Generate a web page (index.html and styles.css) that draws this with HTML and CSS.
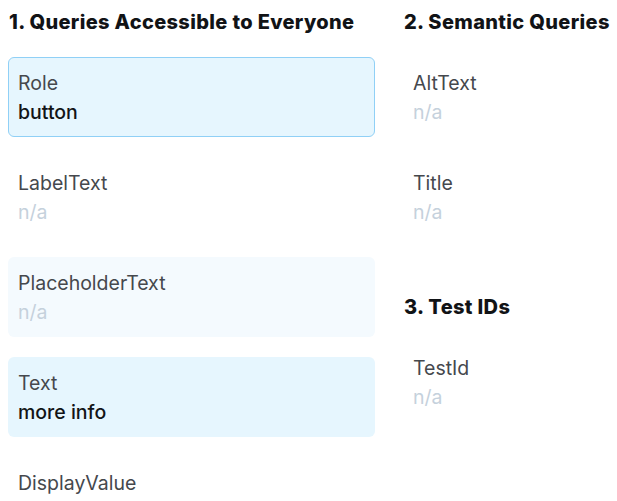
FILE: index.html
```html
<!DOCTYPE html>
<html lang="en">
<head>
<meta charset="utf-8">
<title>Queries</title>
<link rel="stylesheet" href="styles.css">
</head>
<body>
<div class="grid">
  <section class="col">
    <h3 class="heading">1. Queries Accessible to Everyone</h3>
    <div class="card active">
      <div class="label">Role</div>
      <div class="value">button</div>
    </div>
    <div class="card">
      <div class="label">LabelText</div>
      <div class="value na">n/a</div>
    </div>
    <div class="card faint">
      <div class="label">PlaceholderText</div>
      <div class="value na">n/a</div>
    </div>
    <div class="card tinted">
      <div class="label">Text</div>
      <div class="value">more info</div>
    </div>
    <div class="card">
      <div class="label">DisplayValue</div>
      <div class="value na">n/a</div>
    </div>
  </section>
  <section class="col">
    <h3 class="heading">2. Semantic Queries</h3>
    <div class="card">
      <div class="label">AltText</div>
      <div class="value na">n/a</div>
    </div>
    <div class="card">
      <div class="label">Title</div>
      <div class="value na">n/a</div>
    </div>
    <h3 class="heading spaced">3. Test IDs</h3>
    <div class="card">
      <div class="label">TestId</div>
      <div class="value na">n/a</div>
    </div>
  </section>
</div>
</body>
</html>
```
FILE: styles.css
```css
html, body {
  margin: 0;
  padding: 0;
  background: #ffffff;
}
body {
  font-family: Inter, "Noto Sans", sans-serif;
  color: #1a202c;
  box-sizing: border-box;
  width: 617px;
  height: 501px;
  overflow: hidden;
  padding: 8px 0 0 8px;
}
.grid {
  display: grid;
  grid-template-columns: 367px 1fr;
  column-gap: 28px;
}
.col {
  display: flex;
  flex-direction: column;
  gap: 20px;
  min-width: 0;
}
.heading {
  margin: 0 0 1px 1px;
  font-size: 20px;
  line-height: 28px;
  font-weight: 800;
  letter-spacing: 0.35px;
  white-space: nowrap;
  color: #111316;
}
.heading.spaced {
  margin-top: 36px;
}
.card {
  box-sizing: border-box;
  height: 80px;
  padding: 11px 9px;
  border: 1px solid transparent;
  border-radius: 6px;
}
.card.active {
  background: #e6f6fe;
  border-color: #90d0f6;
}
.card.faint {
  background: #f4fafe;
}
.card.tinted {
  background: #e6f6fe;
}
.label {
  font-size: 19.5px;
  line-height: 29px;
  color: #45484d;
}
.value {
  font-size: 19.5px;
  line-height: 29px;
  font-weight: 500;
  color: #121416;
}
.value.na {
  font-weight: 400;
  color: #c5d1dc;
}
```
